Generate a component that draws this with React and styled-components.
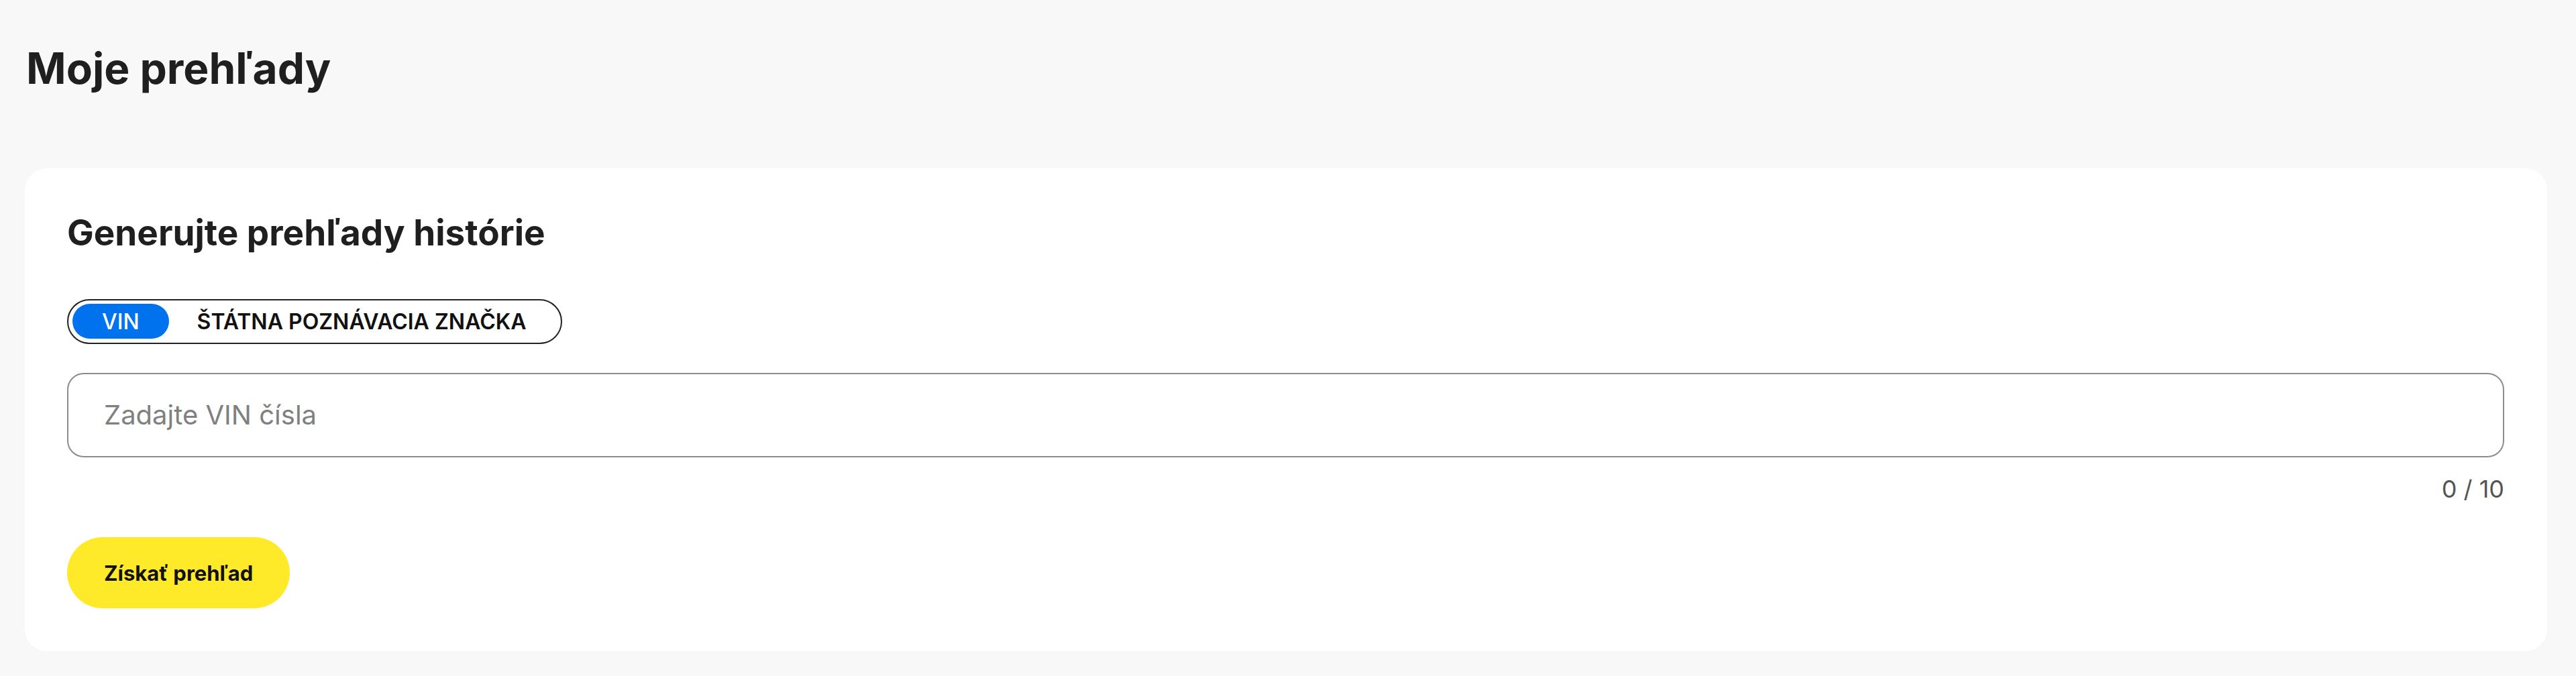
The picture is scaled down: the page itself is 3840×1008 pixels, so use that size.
import { useState } from "react";
import styled, { createGlobalStyle } from "styled-components";

const GlobalStyle = createGlobalStyle`
  html, body {
    margin: 0;
    padding: 0;
    background: #f8f8f8;
    font-family: Inter, "Noto Sans", sans-serif;
    color: #1f1f1f;
  }
`;

const Page = styled.main`
  padding: 63px 43px 36px 37px;
`;

const PageTitle = styled.h1`
  margin: 0 0 111px 2px;
  font-size: 64px;
  line-height: 1.21;
  font-weight: 700;
  color: #1f1f1f;
`;

const Card = styled.section`
  background: #fff;
  border-radius: 33px;
  padding: 64px 64px 64px 63px;
  display: flex;
  flex-direction: column;
`;

const CardTitle = styled.h2`
  margin: 0 0 66px;
  font-size: 53px;
  line-height: 1.21;
  font-weight: 700;
  color: #1f1f1f;
`;

const Switch = styled.div`
  align-self: flex-start;
  display: flex;
  align-items: center;
  height: 67px;
  box-sizing: border-box;
  padding: 0 6px;
  border: 2px solid #222;
  border-radius: 34px;
  margin-bottom: 43px;
`;

const SwitchTab = styled.button`
  height: 52px;
  border: none;
  border-radius: 26px;
  padding: ${(p) => (p.$active ? "0 44px" : "0 45px 0 42px")};
  background: ${(p) => (p.$active ? "#0072ee" : "transparent")};
  color: ${(p) => (p.$active ? "#fff" : "#111")};
  font-family: Inter, sans-serif;
  font-size: 32px;
  font-weight: ${(p) => (p.$active ? 500 : 600)};
  cursor: pointer;
`;

const Field = styled.input`
  box-sizing: border-box;
  width: 100%;
  height: 126px;
  border: 2px solid #8c8c8c;
  border-radius: 25px;
  padding: 0 53px;
  font-family: Inter, sans-serif;
  font-size: 40px;
  color: #222;
  outline: none;
  &::placeholder {
    color: #808080;
  }
`;

const Counter = styled.div`
  align-self: flex-end;
  margin-top: 26px;
  font-size: 36px;
  line-height: 1.21;
  color: #555;
`;

const Submit = styled.button`
  align-self: flex-start;
  margin-top: 50px;
  height: 106px;
  padding: 0 55px;
  border: none;
  border-radius: 53px;
  background: #ffea2a;
  color: #111;
  font-family: Inter, sans-serif;
  font-size: 31px;
  font-weight: 700;
  cursor: pointer;
`;

export default function App() {
  const [mode, setMode] = useState("vin");
  const [value, setValue] = useState("");
  return (
    <>
      <GlobalStyle />
      <Page>
        <PageTitle>Moje prehľady</PageTitle>
        <Card>
          <CardTitle>Generujte prehľady histórie</CardTitle>
          <Switch>
            <SwitchTab $active={mode === "vin"} onClick={() => setMode("vin")}>
              VIN
            </SwitchTab>
            <SwitchTab $active={mode === "plate"} onClick={() => setMode("plate")}>
              ŠTÁTNA POZNÁVACIA ZNAČKA
            </SwitchTab>
          </Switch>
          <Field
            placeholder="Zadajte VIN čísla"
            value={value}
            onChange={(e) => setValue(e.target.value)}
          />
          <Counter>{value.split(/[\s,]+/).filter(Boolean).length} / 10</Counter>
          <Submit>Získať prehľad</Submit>
        </Card>
      </Page>
    </>
  );
}
